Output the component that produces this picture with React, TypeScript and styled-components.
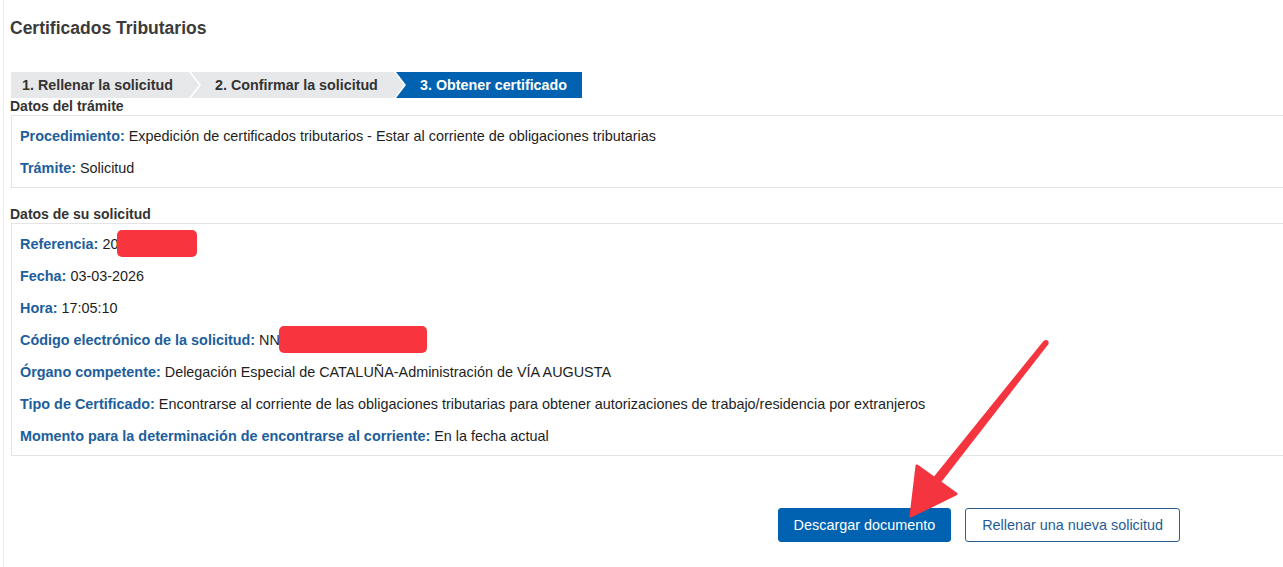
import React from "react";
import styled, { createGlobalStyle } from "styled-components";

const Global = createGlobalStyle`
  html, body { margin: 0; padding: 0; background: #fff; overflow: hidden; }
  body { font-family: "Liberation Sans", Arial, Helvetica, sans-serif; }
`;

const Page = styled.div`
  position: relative;
  margin-left: 3px;
  border-left: 1px solid #ededed;
  padding: 18px 0 0 6px;
  height: 567px;
  box-sizing: border-box;
`;

const Title = styled.h1`
  margin: 0;
  font-size: 17.5px;
  line-height: 20px;
  font-weight: bold;
  color: #3b3b3b;
`;

const Stepper = styled.div`
  display: flex;
  margin: 34px 0 0 1px;
  height: 26px;
`;

const Step = styled.div<{ $w: number; $pos: "first" | "mid" | "last"; $active?: boolean }>`
  width: ${(p) => p.$w}px;
  flex: none;
  box-sizing: border-box;
  display: flex;
  align-items: center;
  padding-left: ${(p) => (p.$pos === "first" ? 11 : 24)}px;
  margin-left: ${(p) => (p.$pos === "first" ? 0 : -8)}px;
  background: ${(p) => (p.$active ? "#0062b1" : "#e7e8ea")};
  color: ${(p) => (p.$active ? "#fff" : "#333")};
  font-size: 14.3px;
  font-weight: bold;
  white-space: nowrap;
  clip-path: ${(p) =>
    p.$pos === "first"
      ? "polygon(0 0, calc(100% - 10px) 0, 100% 50%, calc(100% - 10px) 100%, 0 100%)"
      : p.$pos === "mid"
      ? "polygon(0 0, calc(100% - 10px) 0, 100% 50%, calc(100% - 10px) 100%, 0 100%, 10px 50%)"
      : "polygon(0 0, 100% 0, 100% 100%, 0 100%, 10px 50%)"};
`;

const SectionTitle = styled.h2<{ $top: number }>`
  margin: ${(p) => p.$top}px 0 0 0;
  font-size: 14px;
  line-height: 18px;
  font-weight: bold;
  color: #333;
`;

const Box = styled.div`
  margin: 0 -30px 0 1px;
  border: 1px solid #e4e4e4;
  padding: 10px 8px 9px 8px;
  display: flex;
  flex-direction: column;
  gap: 12px;
`;

const Row = styled.div`
  font-size: 14.4px;
  line-height: 20px;
  height: 20px;
  color: #1e1e1e;
  display: flex;
  align-items: center;
  white-space: nowrap;
`;

const Label = styled.span`
  color: #1c5e9c;
  font-weight: bold;
  margin-right: 4px;
`;

const Redact = styled.span<{ $w: number }>`
  display: inline-block;
  flex: none;
  width: ${(p) => p.$w}px;
  height: 27px;
  margin: -4px 0 -3px -1px;
  background: #f8353f;
  border-radius: 5px;
`;

const Actions = styled.div`
  display: flex;
  justify-content: flex-end;
  gap: 14px;
  margin: 52px 103px 0 0;
`;

const Button = styled.button<{ $primary?: boolean }>`
  height: 34px;
  box-sizing: border-box;
  padding: 0 ${(p) => (p.$primary ? 15 : 16)}px;
  font-family: "Liberation Sans", Arial, sans-serif;
  font-size: 14.4px;
  border-radius: 3px;
  cursor: pointer;
  border: 1px solid ${(p) => (p.$primary ? "#0060ae" : "#2c6090")};
  background: ${(p) => (p.$primary ? "#0062b1" : "#fff")};
  color: ${(p) => (p.$primary ? "#fff" : "#1f5c94")};
`;

const ArrowLayer = styled.svg`
  position: absolute;
  left: -4px;
  top: 0;
  pointer-events: none;
`;

function Arrow() {
  return (
    <ArrowLayer width="1283" height="567" viewBox="0 0 1283 567">
      <polygon points="1043.5,341 1048.5,344 939,485 932,479" fill="#f4343f" />
      <circle cx="1046" cy="342.5" r="2.6" fill="#f4343f" />
      <polygon
        points="911,516 917,466 956,494"
        fill="#f4343f"
        strokeLinejoin="round"
        stroke="#f4343f"
        strokeWidth="3"
      />
    </ArrowLayer>
  );
}

export default function App() {
  return (
    <>
      <Global />
      <Page>
        <Title>Certificados Tributarios</Title>
        <Stepper>
          <Step $w={188} $pos="first">1. Rellenar la solicitud</Step>
          <Step $w={213} $pos="mid">2. Confirmar la solicitud</Step>
          <Step $w={186} $pos="last" $active>3. Obtener certificado</Step>
        </Stepper>
        <SectionTitle $top={-1}>Datos del trámite</SectionTitle>
        <Box>
          <Row><Label>Procedimiento:</Label>Expedición de certificados tributarios - Estar al corriente de obligaciones tributarias</Row>
          <Row><Label>Trámite:</Label>Solicitud</Row>
        </Box>
        <SectionTitle $top={17}>Datos de su solicitud</SectionTitle>
        <Box>
          <Row><Label>Referencia:</Label>20<Redact $w={80} /></Row>
          <Row><Label>Fecha:</Label>03-03-2026</Row>
          <Row><Label>Hora:</Label>17:05:10</Row>
          <Row><Label>Código electrónico de la solicitud:</Label>NN<Redact $w={148} /></Row>
          <Row><Label>Órgano competente:</Label>Delegación Especial de CATALUÑA-Administración de VÍA AUGUSTA</Row>
          <Row><Label>Tipo de Certificado:</Label>Encontrarse al corriente de las obligaciones tributarias para obtener autorizaciones de trabajo/residencia por extranjeros</Row>
          <Row><Label>Momento para la determinación de encontrarse al corriente:</Label>En la fecha actual</Row>
        </Box>
        <Actions>
          <Button $primary>Descargar documento</Button>
          <Button>Rellenar una nueva solicitud</Button>
        </Actions>
        <Arrow />
      </Page>
    </>
  );
}
